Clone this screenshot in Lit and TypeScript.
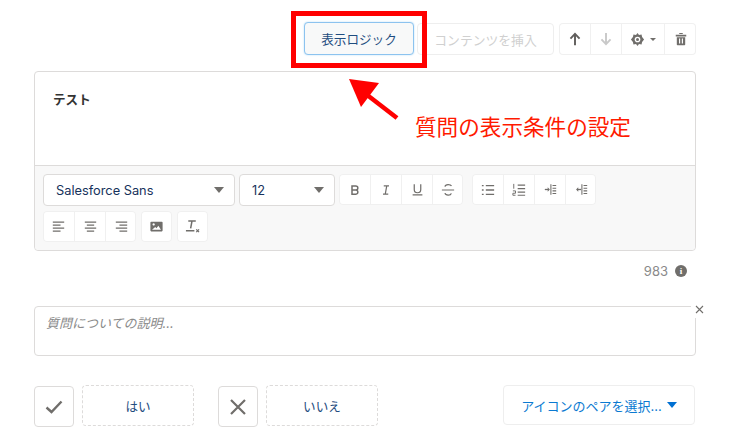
import { LitElement, html, css, svg } from "lit";
import { customElement } from "lit/decorators.js";

const ic = (body: unknown, size = 13) => html`<svg width=${size} height=${size} viewBox="0 0 16 16" fill="none" stroke="#706e6b" stroke-width="1.4">${body}</svg>`;

const icons = {
  up: ic(svg`<path d="M8 15V2.5M2.8 7.6 8 2.2l5.2 5.4" stroke="#605e5c" stroke-width="2.2"/>`, 14),
  down: ic(svg`<path d="M8 1v12.5M2.8 8.4 8 13.8l5.2-5.4" stroke="#c9c9c9" stroke-width="2.2"/>`, 14),
  gear: ic(svg`<path d="M8 1l1.6 2.2 2.7-.5.6 2.7L15 8l-2.1 2.6-.6 2.7-2.7-.5L8 15l-1.6-2.2-2.7.5-.6-2.7L1 8l2.1-2.6.6-2.7 2.7.5z" fill="#706e6b" stroke="none"/><circle cx="8" cy="8" r="3" fill="#fff" stroke="none"/><circle cx="8" cy="8" r="1.6" fill="#706e6b" stroke="none"/>`, 15),
  trash: ic(svg`<path d="M6 2.2h4V1H6zM2 3h12v2H2zM3.2 6h9.6v8.2a.8.8 0 0 1-.8.8H4a.8.8 0 0 1-.8-.8z" fill="#706e6b" stroke="none"/><path d="M6.4 7.5v5.5M9.6 7.5v5.5" stroke="#fff" stroke-width="1.3"/>`, 14),
  b: ic(svg`<path d="M4 2.5h5a2.7 2.7 0 0 1 0 5.5H4zM4 8h5.6a2.8 2.8 0 0 1 0 5.5H4z" stroke-width="2"/>`, 12),
  i: ic(svg`<path d="M5 2.5h7M4 13.5h7M9 2.5l-2 11" stroke-width="1.6"/>`, 12),
  u: ic(svg`<path d="M4 1.5v6.5a4 4 0 0 0 8 0V1.5M2 14.5h12" stroke-width="1.5"/>`, 13),
  s: ic(svg`<path d="M12 3.5C11 1.5 5 1 4.5 4.2M1 8h14M4.5 11.5c.7 3 6.6 3 7.3.3" stroke-width="1.4"/>`, 14),
  ul: ic(svg`<path d="M5.5 3h9.5M5.5 8h9.5M5.5 13h9.5M1 3h2M1 8h2M1 13h2" stroke-width="1.5"/>`, 14),
  ol: ic(svg`<path d="M6.5 2.5H15M6.5 6.5H15M6.5 10.5H15M6.5 14H15" stroke-width="1.4"/><path d="M2 1v5.5M1 9h3v2.7H1v2.3h3" stroke-width="1.1"/>`, 14),
  indent: ic(svg`<path d="M8.5 1.5v13M10.5 3H15M10.5 6.4H15M10.5 9.7H15M10.5 13H15" stroke-width="1.3"/><path d="M1 8h4.5" stroke-width="1.6"/><path d="M4.5 5.3 7.2 8l-2.7 2.7z" fill="#706e6b" stroke="none"/>`),
  outdent: ic(svg`<path d="M8.5 1.5v13M10.5 3H15M10.5 6.4H15M10.5 9.7H15M10.5 13H15" stroke-width="1.3"/><path d="M3 8h4.5" stroke-width="1.6"/><path d="M4 5.3 1.3 8 4 10.7z" fill="#706e6b" stroke="none"/>`),
  left: ic(svg`<path d="M1 2.5h14M1 6.2h9.5M1 9.9h14M1 13.6h9.5" stroke-width="1.6"/>`),
  center: ic(svg`<path d="M1 2.5h14M3.5 6.2h9M1 9.9h14M3.5 13.6h9" stroke-width="1.6"/>`),
  right: ic(svg`<path d="M1 2.5h14M5.5 6.2H15M1 9.9h14M5.5 13.6H15" stroke-width="1.6"/>`),
  image: ic(svg`<path fill-rule="evenodd" d="M1.5 2h13a1 1 0 0 1 1 1v10a1 1 0 0 1-1 1h-13a1 1 0 0 1-1-1V3a1 1 0 0 1 1-1zM2.5 12h11L10.3 7l-2.4 3-1.5-1.5z M4.5 4a1.4 1.4 0 1 0 .01 0z" fill="#706e6b" stroke="none"/>`),
  clear: ic(svg`<path d="M3.5 2h8M7.5 2 6 10M1 12.5h9" stroke-width="1.6"/><path d="M12 11l3 3M15 11l-3 3" stroke-width="1.3"/>`, 15),
};

@customElement("app-root")
export class AppRoot extends LitElement {
  static styles = css`
    :host { display: block; position: relative; width: 732px; height: 446px; background: #fff; overflow: hidden;
      font-family: Inter, "Noto Sans", "Noto Sans CJK JP", sans-serif; color: #16325c; font-size: 12px; }
    .page { display: flex; flex-direction: column; padding: 22px 36px 0 34px; }
    .top { display: flex; justify-content: flex-end; align-items: flex-start; height: 33px; }
    .logic { width: 110px; height: 33px; box-sizing: border-box; border: 1px solid #8cc3ef; border-radius: 4px; background: #f8f9f9;
      box-shadow: 0 0 2px #b5dcf8; display: flex; align-items: center; justify-content: center; color: #1f4d80; font-size: 12.6px; }
    .insert { width: 137px; height: 32px; margin: 1px 5px 0 3px; box-sizing: border-box; border: 1px solid #eeeeee; border-radius: 4px;
      display: flex; align-items: center; justify-content: center; color: #d0d0d0; font-size: 12.8px; }
    .group { display: flex; background: #fff; box-shadow: inset 0 0 0 1px #f0f0f0; border-radius: 4px; }
    .top .group { height: 32px; margin-top: 1px; }
    .group > div { display: flex; align-items: center; justify-content: center; width: 31px; box-sizing: border-box; border-left: 1px solid #f0f0f0; }
    .group > div:first-child { border-left: 0; }
    .top .group > div.gear { width: 43px; gap: 5px; }
    .top .group > div.bin { width: 32px; }
    .caret { width: 0; height: 0; border: 3px solid transparent; border-top: 3.5px solid #706e6b; border-bottom: 0; }
    .editor { margin-top: 16px; height: 180px; box-sizing: border-box; border: 1px solid #dddbda; border-radius: 4px; display: flex; flex-direction: column; }
    .body { flex: none; height: 94px; box-sizing: border-box; padding: 20px 18px; font-size: 12.6px; font-weight: 700; color: #333; line-height: 16px; border-bottom: 1px solid #dddbda; }
    .tools { flex: 1; min-height: 0; background: #f8f8f8; padding: 8px 8px 0; display: flex; flex-direction: column; gap: 5px; border-radius: 0 0 4px 4px; }
    .row { display: flex; gap: 5px; height: 32px; }
    .row.first { gap: 4px; }
    .row .group { height: 31px; }
    .row.first .group { margin-right: 5px; }
    .row.first .group.last { margin-right: 0; }
    .select { height: 32px; box-sizing: border-box; border: 1px solid #dddbda; border-radius: 4px; background: #fff; display: flex; align-items: center;
      justify-content: space-between; padding: 0 10px 0 12px; font-size: 12.8px; color: #16325c; }
    .select.font { width: 192px; }
    .select.size { width: 96px; }
    .tri { width: 0; height: 0; border: 5.5px solid transparent; border-top: 6.5px solid #706e6b; border-bottom: 0; }
    .count { display: flex; justify-content: flex-end; align-items: center; gap: 7px; margin-top: 13px; height: 14px; color: #8a8a8a; font-size: 13px; padding-right: 9px; }
    .info { width: 12px; height: 12px; border-radius: 50%; background: #706e6b; color: #fff; font-size: 9px; font-weight: 700; font-family: "Liberation Serif", serif;
      display: flex; align-items: center; justify-content: center; }
    .desc { margin-top: 28px; height: 50px; box-sizing: border-box; border: 1px solid #dddbda; border-radius: 4px; padding: 8px 11px; color: #8a8a8a; font-style: italic; font-size: 13px; line-height: 16px; position: relative; }
    .close { position: absolute; right: -12px; top: -6px; width: 16px; height: 17px; background: #fff; display: flex; align-items: center; justify-content: center; }
    .choices { margin-top: 29px; display: flex; align-items: flex-start; }
    .iconbox { width: 40px; height: 41px; margin-top: 1px; box-sizing: border-box; border: 1px solid #dddbda; border-radius: 4px; display: flex; align-items: center; justify-content: center; }
    .label { width: 112px; height: 41px; margin-left: 8px; box-sizing: border-box; border: 1px dashed #dddbda; border-radius: 4px; display: flex; align-items: center; justify-content: center; color: #1f4d80; font-size: 12.6px; }
    .spacer-g { width: 24px; }
    .pair { margin-left: auto; margin-right: 1px; width: 192px; height: 40px; box-sizing: border-box; border: 1px solid #eeeeee; border-radius: 4px; display: flex; align-items: center; justify-content: center; gap: 5px; color: #0b7ad1; font-size: 13px; }
    .pair .tri2 { width: 0; height: 0; border: 5.5px solid transparent; border-top: 6.5px solid #0070d2; border-bottom: 0; }
    .redbox { position: absolute; left: 291px; top: 11px; width: 136px; height: 57px; box-sizing: border-box; border: 5px solid #ff0000; }
    .arrow { position: absolute; left: 340px; top: 70px; }
    .note { position: absolute; left: 415px; top: 111px; font-size: 21.6px; line-height: 30px; color: #ff1a00; font-family: "Noto Sans CJK JP", sans-serif; white-space: nowrap; }
  `;

  render() {
    const btn = (i: unknown) => html`<div>${i}</div>`;
    return html`
      <div class="page">
        <div class="top">
          <div class="logic">表示ロジック</div>
          <div class="insert">コンテンツを挿入</div>
          <div class="group">
            ${btn(icons.up)}${btn(icons.down)}
            <div class="gear">${icons.gear}<span class="caret"></span></div>
            <div class="bin">${icons.trash}</div>
          </div>
        </div>
        <div class="editor">
          <div class="body">テスト</div>
          <div class="tools">
            <div class="row first">
              <div class="select font"><span>Salesforce Sans</span><span class="tri"></span></div>
              <div class="select size"><span>12</span><span class="tri"></span></div>
              <div class="group">${btn(icons.b)}${btn(icons.i)}${btn(icons.u)}${btn(icons.s)}</div>
              <div class="group last">${btn(icons.ul)}${btn(icons.ol)}${btn(icons.indent)}${btn(icons.outdent)}</div>
            </div>
            <div class="row">
              <div class="group">${btn(icons.left)}${btn(icons.center)}${btn(icons.right)}</div>
              <div class="group">${btn(icons.image)}</div>
              <div class="group">${btn(icons.clear)}</div>
            </div>
          </div>
        </div>
        <div class="count"><span>983</span><span class="info">i</span></div>
        <div class="desc">質問についての説明...
          <span class="close"><svg width="9" height="9" viewBox="0 0 9 9"><path d="M1 1l7 7M8 1l-7 7" stroke="#706e6b" stroke-width="1.1"/></svg></span>
        </div>
        <div class="choices">
          <div class="iconbox"><svg width="18" height="14" viewBox="0 0 18 14" fill="none"><path d="M1.5 7.5l5 4.5L16.5 1.5" stroke="#706e6b" stroke-width="2.4"/></svg></div>
          <div class="label">はい</div>
          <div class="spacer-g"></div>
          <div class="iconbox"><svg width="16" height="16" viewBox="0 0 16 16" fill="none"><path d="M1 1l14 14M15 1 1 15" stroke="#706e6b" stroke-width="2.2"/></svg></div>
          <div class="label">いいえ</div>
          <div class="pair"><span>アイコンのペアを選択...</span><span class="tri2"></span></div>
        </div>
      </div>
      <div class="redbox"></div>
      <svg class="arrow" width="64" height="52" viewBox="0 0 64 52" fill="none"><path d="M57 48 22 21" stroke="#ff0000" stroke-width="4.5"/><path d="M9 9l30 4-18 24z" fill="#ff0000"/></svg>
      <div class="note">質問の表示条件の設定</div>
    `;
  }
}
